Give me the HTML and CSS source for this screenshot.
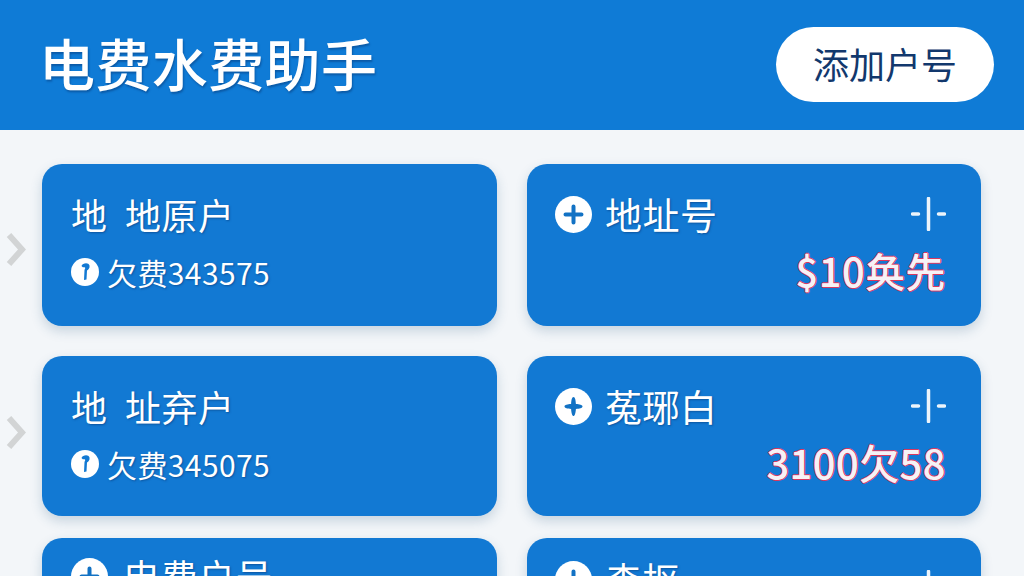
FILE: index.html
```html
<!DOCTYPE html>
<html lang="zh-CN">
<head>
<meta charset="utf-8">
<title>电费水费助手</title>
<link rel="stylesheet" href="styles.css">
</head>
<body>
<header class="top">
  <h1 class="app-title">电费水费助手</h1>
  <button class="add-btn"><span class="add-label">添加户号</span></button>
</header>
<main class="grid">
  <section class="card card-a">
    <svg class="chev" viewBox="0 0 20 35"><path d="M3 3l13 14.500L3 32"/></svg>
    <div class="name name-wide">地 地原户</div>
    <div class="due"><svg class="key" viewBox="0 0 28 28"><circle cx="14" cy="14" r="14" fill="#fff"/><path d="M10.500 8c1-3 7-4 8-.5.500 2.500-1 4-2.500 5l-.5 9-2.500.5.500-10c.5-1.500 1-2 .5-2.500-1-.5-2 .5-3.500-1.500z" fill="#1279d3"/></svg><span>欠费343575</span></div>
  </section>
  <section class="card card-b">
    <div class="head">
      <svg class="plus" viewBox="0 0 37 37"><circle cx="18.500" cy="18.500" r="18.500" fill="#fff"/><path d="M18.500 10.500v16M10.500 18.500h16" stroke="#1272c4" stroke-width="4" stroke-linecap="round"/></svg>
      <span class="name">地址号</span>
      <svg class="tick" viewBox="0 0 35 34"><path d="M1.500 17h6M27.500 17h6M17.500 1.500v31" stroke="#fff" stroke-width="3.500" stroke-linecap="round" opacity=".92"/></svg>
    </div>
    <div class="amount">$10奂先</div>
  </section>
  <section class="card card-a card-short">
    <svg class="chev" viewBox="0 0 20 35"><path d="M3 3l13 14.500L3 32"/></svg>
    <div class="name name-wide">地 址弃户</div>
    <div class="due"><svg class="key" viewBox="0 0 28 28"><circle cx="14" cy="14" r="14" fill="#fff"/><path d="M10.500 8c1-3 7-4 8-.5.500 2.500-1 4-2.500 5l-.5 9-2.500.5.500-10c.5-1.500 1-2 .5-2.500-1-.5-2 .5-3.500-1.500z" fill="#1279d3"/></svg><span>欠费345075</span></div>
  </section>
  <section class="card card-b card-short">
    <div class="head">
      <svg class="plus" viewBox="0 0 37 37"><circle cx="18.500" cy="18.500" r="18.500" fill="#fff"/><path d="M18.500 9c1.600 0 2.200 3 2.400 7.100 3.500.2 6.600.8 6.600 2.400s-3.100 2.200-6.600 2.400c-.2 4.100-1.200 7.100-2.400 7.100s-2.200-3-2.400-7.100c-3.500-.2-6.600-.8-6.600-2.400s3.100-2.200 6.600-2.400c.2-4.100.8-7.100 2.400-7.100z" fill="#1272c4"/></svg>
      <span class="name">菟琊白</span>
      <svg class="tick" viewBox="0 0 35 34"><path d="M1.500 17h6M27.500 17h6M17.500 1.500v31" stroke="#fff" stroke-width="3.500" stroke-linecap="round" opacity=".92"/></svg>
    </div>
    <div class="amount">3100欠58</div>
  </section>
  <section class="card card-c">
    <div class="head head-left">
      <svg class="plus" viewBox="0 0 37 37"><circle cx="18.500" cy="18.500" r="18.500" fill="#fff"/><path d="M18.500 10.500v16M10.500 18.500h16" stroke="#1272c4" stroke-width="4" stroke-linecap="round"/></svg>
      <span class="name">电费户号</span>
    </div>
  </section>
  <section class="card card-b card-c">
    <div class="head">
      <svg class="plus" viewBox="0 0 37 37"><circle cx="18.500" cy="18.500" r="18.500" fill="#fff"/><path d="M18.500 10.500v16M10.500 18.500h16" stroke="#1272c4" stroke-width="4" stroke-linecap="round"/></svg>
      <span class="name">森抠</span>
      <svg class="tick tick-low" viewBox="0 0 35 34"><path d="M1.500 17h6M27.500 17h6M17.500 1.500v31" stroke="#fff" stroke-width="3.500" stroke-linecap="round" opacity=".92"/></svg>
    </div>
  </section>
</main>
</body>
</html>
```
FILE: styles.css
```css
* { box-sizing: border-box; }
html, body { margin: 0; height: 100%; overflow: hidden; }
body {
  width: 1024px;
  height: 576px;
  background: #f3f6f9;
  color: #fff;
  font-family: "Noto Sans CJK SC", "Noto Sans", sans-serif;
}
.top {
  height: 130px;
  background: #0f7bd6;
  display: flex;
  align-items: center;
  justify-content: space-between;
  padding: 0 30px 0 39px;
}
.app-title {
  margin: 0 0 6px;
  font-size: 56px;
  font-weight: 500;
  letter-spacing: .4px;
  line-height: 1;
  text-shadow: 1px 2px 2px rgba(6, 50, 110, .45);
}
.add-btn {
  width: 218px;
  height: 75px;
  padding: 0 0 4px;
  border: 0;
  border-radius: 38px;
  background: #fff;
  color: #12386d;
  font: 400 36px/1 "Noto Sans CJK SC", sans-serif;
  margin-bottom: 1px;
}
.grid {
  display: grid;
  grid-template-columns: 455px 454px;
  grid-template-rows: 162px 160px 68px;
  column-gap: 30px;
  row-gap: 30px;
  padding: 34px 0 0 42px;
}
.card {
  position: relative;
  background: #1279d3;
  border-radius: 20px;
  box-shadow: 0 5px 12px rgba(40, 90, 130, .22);
  padding: 28px 29px 0;
}
.card-b { padding-right: 35px; padding-left: 28px; }
.card-c { margin-top: -8px; padding-top: 16px; }
.chev {
  position: absolute;
  left: -36px;
  top: 68px;
  width: 20px;
  height: 35px;
  fill: none;
  stroke: #d2d4d5;
  stroke-width: 6;
}
.card-short .chev { top: 59px; }
.name {
  font-size: 36px;
  line-height: 44px;
  letter-spacing: .5px;
  text-shadow: 1px 1px 2px rgba(6, 50, 110, .5);
}
.name-wide { white-space: pre; word-spacing: 9px; }
.due {
  display: flex;
  align-items: center;
  gap: 8px;
  margin-top: 17px;
  font-size: 30px;
  line-height: 38px;
  letter-spacing: .4px;
  text-shadow: 1px 1px 2px rgba(6, 50, 110, .5);
}
.key { width: 28px; height: 28px; flex: none; }
.head {
  display: flex;
  align-items: center;
  gap: 13px;
}
.head-left { gap: 15px; }
.plus { width: 37px; height: 37px; flex: none; }
.head .name { flex: 1; font-size: 37px; }
.tick { width: 35px; height: 34px; flex: none; }
.tick-low { margin-top: 16px; }
.amount {
  margin-top: 9px;
  text-align: right;
  font-size: 40px;
  line-height: 50px;
  font-weight: 500;
  letter-spacing: .4px;
  color: #f6f2f6;
  text-shadow: -1px 0 0 #d9385f, 1px 0 0 #d9385f, 0 -1px 0 #d9385f, 0 1px 0 #d9385f;
}
```
